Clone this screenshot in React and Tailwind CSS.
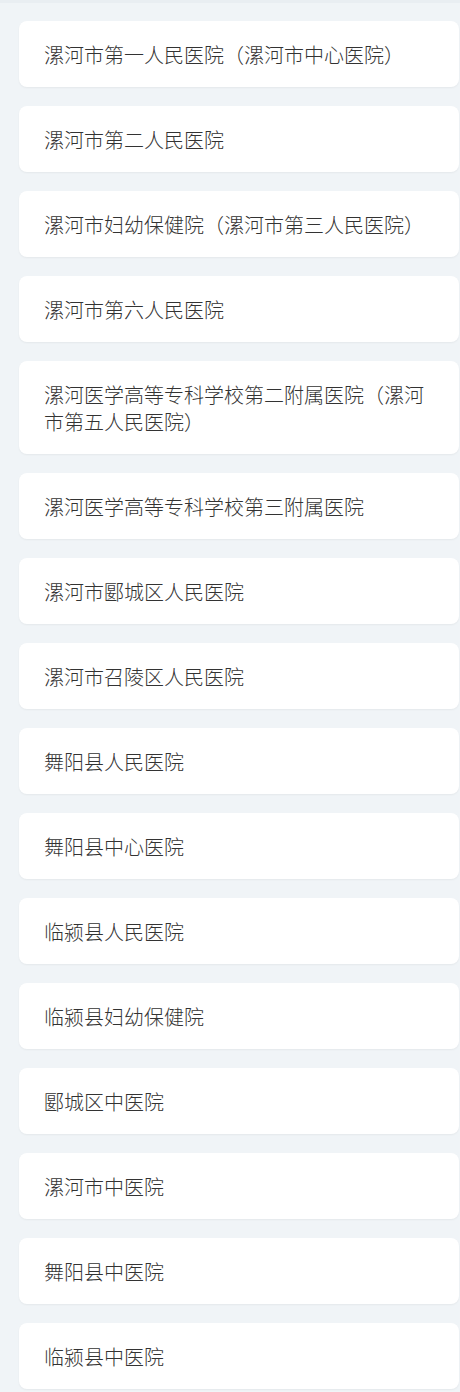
import React from 'react';

const HOSPITALS = [
  '漯河市第一人民医院（漯河市中心医院）',
  '漯河市第二人民医院',
  '漯河市妇幼保健院（漯河市第三人民医院）',
  '漯河市第六人民医院',
  '漯河医学高等专科学校第二附属医院（漯河市第五人民医院）',
  '漯河医学高等专科学校第三附属医院',
  '漯河市郾城区人民医院',
  '漯河市召陵区人民医院',
  '舞阳县人民医院',
  '舞阳县中心医院',
  '临颍县人民医院',
  '临颍县妇幼保健院',
  '郾城区中医院',
  '漯河市中医院',
  '舞阳县中医院',
  '临颍县中医院',
];

export default function App() {
  return (
    <div
      className="min-h-[1392px] bg-[#f0f4f7] border-t-[3px] border-[#e9eef2] pt-[18px] pl-[19px] pr-px"
      style={{ fontFamily: '"Noto Sans CJK SC", "Noto Sans", sans-serif' }}
    >
      <ul className="flex flex-col gap-[19px]">
        {HOSPITALS.map((name) => (
          <li
            key={name}
            className="bg-white rounded-lg shadow-[0_1px_2px_rgba(0,0,0,0.05)] pl-[25px] pr-[25px] pt-[20px] pb-[19px] text-[20px] leading-[27px] font-light text-[#333]"
          >
            {name}
          </li>
        ))}
      </ul>
    </div>
  );
}
